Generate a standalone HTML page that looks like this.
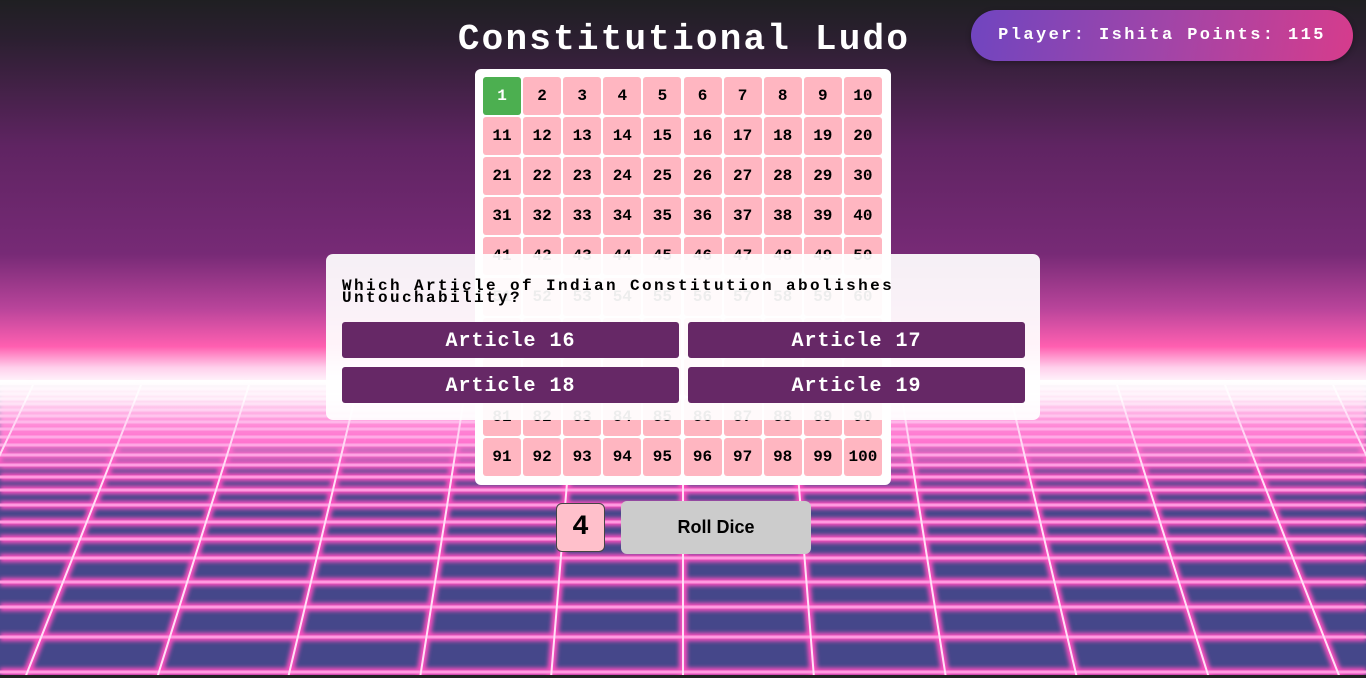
<!DOCTYPE html>
<html><head><meta charset="utf-8"><style>
*{margin:0;padding:0;box-sizing:border-box}
body{width:1366px;height:678px;overflow:hidden;position:relative;font-family:"Liberation Mono",monospace;font-weight:bold;background:#222}
#bg{position:absolute;left:0;top:0}
h1{position:absolute;left:0;width:1366px;top:20px;text-align:center;color:#fff;font-size:36px;letter-spacing:2.2px;line-height:40px;padding-left:2px}
.pill{position:absolute;left:971px;top:10px;width:382px;height:51px;border-radius:26px;background:linear-gradient(100deg,#7045c0,#a045a8 50%,#d63c8c);color:#fff;font-size:17px;line-height:51px;text-align:center;letter-spacing:2.4px;box-shadow:0 2px 6px rgba(0,0,0,.3)}
.board{position:absolute;left:475px;top:69px;width:416px;height:416px;background:#fff;border-radius:6px;padding:8px}
.cell{position:absolute;width:38px;height:38px;background:#ffb6c1;border-radius:3px;text-align:center;line-height:38px;font-size:16px;color:#000;letter-spacing:0}
.cell.g{background:#4caf50;color:#fff}
.modal{position:absolute;left:326px;top:254px;width:714px;height:166px;background:rgba(255,255,255,.93);border-radius:7px}
.q{position:absolute;left:16px;top:26px;font-size:16px;line-height:12px;letter-spacing:2.4px;color:#000}
.btn{position:absolute;width:337px;height:36px;background:#662866;color:#fff;border-radius:3px;text-align:center;line-height:40px;font-size:20px;letter-spacing:1px}
.dice{position:absolute;left:556px;top:503px;width:49px;height:49px;background:#ffc0cb;border:1px solid #444;border-radius:6px;text-align:center;line-height:47px;font-size:28px;color:#000}
.roll{position:absolute;left:621px;top:501px;width:190px;height:53px;background:#ccc;border-radius:6px;text-align:center;line-height:53px;font-family:"Liberation Sans",sans-serif;font-weight:bold;font-size:18px;color:#000}
</style></head><body>
<svg id="bg" width="1366" height="678" viewBox="0 0 1366 678">
<defs>
<linearGradient id="sky" x1="0" y1="0" x2="0" y2="1">
<stop offset="0" stop-color="#1f1f22"/>
<stop offset="0.1" stop-color="#2b1f30"/>
<stop offset="0.38" stop-color="#5f2462"/>
<stop offset="0.66" stop-color="#772a76"/>
<stop offset="0.8" stop-color="#b8449a"/>
<stop offset="0.9" stop-color="#ff5fb0"/>
<stop offset="0.955" stop-color="#ffd0ec"/>
<stop offset="1" stop-color="#ffffff"/>
</linearGradient>
<linearGradient id="haze" x1="0" y1="0" x2="0" y2="1">
<stop offset="0" stop-color="#fff" stop-opacity="1"/>
<stop offset="0.2" stop-color="#fff" stop-opacity="0.85"/>
<stop offset="0.5" stop-color="#ffc8f0" stop-opacity="0.45"/>
<stop offset="1" stop-color="#ffc8f0" stop-opacity="0"/>
</linearGradient>
<filter id="gl"><feGaussianBlur stdDeviation="2"/></filter>
</defs>
<rect width="1366" height="385" fill="url(#sky)"/>
<rect y="385" width="1366" height="293" fill="#45478a"/>
<g stroke="#ff4fc0" stroke-width="8" filter="url(#gl)">
<path d="M0 672H1366M0 637H1366M0 607H1366M0 582H1366M0 558H1366M0 539H1366M0 522H1366M0 505H1366M0 490H1366M0 477H1366M0 465H1366M0 455H1366M0 445H1366M0 437H1366M0 429H1366M0 422H1366M0 416H1366M0 410H1366M0 404H1366M0 399H1366M0 394H1366M0 389H1366"/>
<path d="M-237 678L-76 385M-106 678L33 385M25 678L141 385M157 678L249 385M288 678L358 385M420 678L466 385M551 678L575 385M683 678L683 385M814 678L791 385M946 678L900 385M1077 678L1008 385M1209 678L1117 385M1340 678L1225 385M1472 678L1333 385M1603 678L1442 385"/>
</g>
<g stroke="#ff9ae0" stroke-width="3">
<path d="M0 672H1366M0 637H1366M0 607H1366M0 582H1366M0 558H1366M0 539H1366M0 522H1366M0 505H1366M0 490H1366M0 477H1366M0 465H1366M0 455H1366M0 445H1366M0 437H1366M0 429H1366M0 422H1366M0 416H1366M0 410H1366M0 404H1366M0 399H1366M0 394H1366M0 389H1366"/>
</g>
<g stroke="#ffe0f6" stroke-width="2">
<path d="M-237 678L-76 385M-106 678L33 385M25 678L141 385M157 678L249 385M288 678L358 385M420 678L466 385M551 678L575 385M683 678L683 385M814 678L791 385M946 678L900 385M1077 678L1008 385M1209 678L1117 385M1340 678L1225 385M1472 678L1333 385M1603 678L1442 385"/>
</g>
<rect y="380" width="1366" height="95" fill="url(#haze)"/>
<rect y="675" width="1366" height="3" fill="#222"/>
</svg>
<h1>Constitutional Ludo</h1>
<div class="pill">Player: Ishita Points: 115</div>
<div class="board" id="board"></div>
<div class="modal">
<div class="q">Which Article of Indian Constitution abolishes<br>Untouchability?</div>
<div class="btn" style="left:16px;top:68px">Article 16</div>
<div class="btn" style="left:362px;top:68px">Article 17</div>
<div class="btn" style="left:16px;top:113px">Article 18</div>
<div class="btn" style="left:362px;top:113px">Article 19</div>
</div>
<div class="dice">4</div>
<div class="roll">Roll Dice</div>
<script>
var b=document.getElementById('board'),h='';
for(var i=0;i<100;i++){var r=Math.floor(i/10),c=i%10;
h+='<div class="cell'+(i==0?' g':'')+'" style="left:'+(8+c*40.1)+'px;top:'+(8+r*40.1)+'px">'+(i+1)+'</div>';}
b.innerHTML=h;
</script>
</body></html>
